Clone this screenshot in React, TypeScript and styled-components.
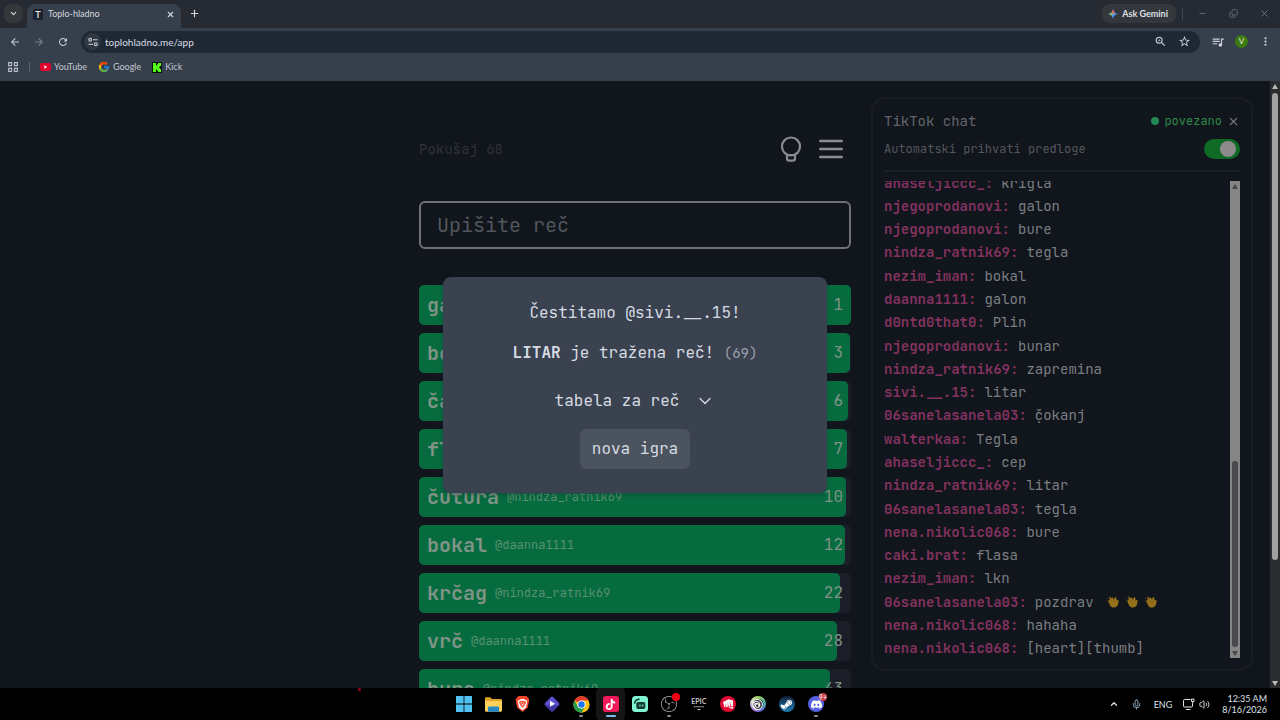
import React from "react";
import styled, { createGlobalStyle } from "styled-components";
import {
  MdArrowBack,
  MdArrowForward,
  MdRefresh,
  MdOutlineZoomIn,
  MdStarBorder,
  MdQueueMusic,
  MdMoreVert,
} from "react-icons/md";
import {
  SiTiktok,
  SiBrave,
  SiObsstudio,
  SiRiotgames,
  SiUbisoft,
  SiDiscord,
} from "react-icons/si";
import { FcGoogle } from "react-icons/fc";
import { FaSteamSymbol } from "react-icons/fa";
import { ChevronDown, ChevronUp, Copy, Mic, Minus, Plus, Volume2, X } from "lucide-react";

const mono = `"JetBrains Mono", "DejaVu Sans Mono", "Liberation Mono", monospace`;
const ui = `Lato, Roboto, "Noto Sans", sans-serif`;

const GlobalStyle = createGlobalStyle`
  * { box-sizing: border-box; }
  body { margin: 0; background: #11151c; }
  button { border: 0; padding: 0; background: none; color: inherit; font: inherit; cursor: pointer; }
  a { color: inherit; text-decoration: none; }
  p { margin: 0; }
  svg { display: block; flex: none; }
`;

const Desktop = styled.div`
  height: 100vh;
  display: flex;
  flex-direction: column;
  overflow: hidden;
  font-family: ${ui};
`;

/* ---------- browser chrome ---------- */

const TabStrip = styled.header`
  flex: none;
  height: 28px;
  display: flex;
  align-items: center;
  padding: 0 0 1px 4px;
  background: #252a33;
  color: #d3d7dd;
`;

const TabSearch = styled.button`
  width: 19px;
  height: 19px;
  display: grid;
  place-items: center;
  border-radius: 7px;
  background: #35373b;
`;

const Tab = styled.div`
  align-self: flex-end;
  width: 154px;
  height: 24px;
  margin: 0 0 -1px 4px;
  padding: 0 6px 4px;
  display: flex;
  align-items: center;
  gap: 5px;
  border-radius: 8px 8px 0 0;
  background: #363f4c;
  font-size: 9px;
  line-height: 12px;
`;

const TabTitle = styled.span`
  flex: 1;
`;

const Favicon = styled.span`
  width: 10px;
  height: 11px;
  display: grid;
  place-items: center;
  border-radius: 2px;
  background: #1b222d;
  color: #ffffff;
  font-size: 10px;
  line-height: 10px;
`;

const NewTab = styled.button`
  margin-left: 8px;
`;

const WindowControls = styled.div`
  margin-left: auto;
  display: flex;
  align-items: center;
  color: #747982;
`;

const AskGemini = styled.button`
  height: 19px;
  padding: 0 8px 0 6px;
  display: flex;
  align-items: center;
  gap: 4px;
  border-radius: 8px;
  background: #34373b;
  color: #dfe1e5;
  font-size: 9px;
  font-weight: 700;
`;

const Separator = styled.i`
  width: 1px;
  height: 12px;
  margin: 0 4px 0 6px;
  background: #414854;
`;

const WindowButton = styled.button`
  width: 31px;
  height: 27px;
  display: grid;
  place-items: center;
`;

const Toolbar = styled.nav`
  flex: none;
  height: 27px;
  display: flex;
  align-items: center;
  padding: 0 3px 0 8px;
  background: #363f4c;
  color: #cbd0d8;
`;

const ToolButton = styled.button<{ $dim?: boolean }>`
  width: 24px;
  height: 20px;
  display: grid;
  place-items: center;
  color: ${(p) => (p.$dim ? "#7a828e" : "#cbd0d8")};
`;

const NavButtons = styled.div`
  display: flex;
  margin: 0 6px 0 -5px;
`;

const AddressBar = styled.div`
  flex: 1;
  height: 22px;
  margin-right: 6px;
  padding: 0 4px 0 3px;
  display: flex;
  align-items: center;
  border-radius: 11px;
  background: #1e2734;
`;

const SiteInfo = styled.button`
  width: 17px;
  height: 17px;
  display: grid;
  place-items: center;
  border-radius: 50%;
  background: #303844;
`;

const Address = styled.input`
  flex: 1;
  min-width: 0;
  margin-left: 4px;
  padding: 0;
  border: 0;
  outline: 0;
  background: none;
  color: #dadee4;
  font: 10px/16px ${ui};
`;

const Avatar = styled.button`
  width: 13px;
  height: 13px;
  margin: 0 5px;
  border-radius: 50%;
  background: #3c7a12;
  color: #e6ecd9;
  font-size: 8px;
  line-height: 13px;
`;

const Bookmarks = styled.nav`
  flex: none;
  height: 26px;
  padding: 0 8px 2px;
  display: flex;
  align-items: center;
  gap: 11px;
  background: #363f4c;
  color: #c3c8d0;
  font-size: 9px;
  line-height: 12px;
`;

const Bookmark = styled.a`
  display: flex;
  align-items: center;
  gap: 3px;
`;

const BookmarkDivider = styled.i`
  width: 1px;
  height: 10px;
  margin-right: -1px;
  background: #5a626f;
`;

/* ---------- page ---------- */

const Viewport = styled.div`
  flex: 1;
  min-height: 0;
  display: flex;
`;

const Page = styled.div`
  position: relative;
  flex: 1;
  min-width: 0;
  overflow: hidden;
  display: grid;
  grid-template-columns: 1fr minmax(0, 432px) 1fr;
  grid-template-rows: minmax(0, 1fr);
  background: #11151c;
  font-family: ${mono};
`;

const Game = styled.main`
  grid-column: 2;
  padding-top: 52px;
`;

const GameHeader = styled.div`
  height: 32px;
  display: flex;
  align-items: center;
  gap: 8px;
  padding-right: 4px;
  color: #898c90;
`;

const Attempt = styled.span`
  flex: 1;
  color: #2f3338;
  font-size: 14px;
  line-height: 20px;
`;

const IconButton = styled.button`
  width: 32px;
  height: 32px;
  display: grid;
  place-items: center;
`;

const WordInput = styled.input`
  display: block;
  width: 100%;
  height: 48px;
  margin: 36px 0;
  padding: 0 16px;
  border: 2px solid #6e7175;
  border-radius: 6px;
  outline: 0;
  background: #11151c;
  color: #898c90;
  font: 20px/28px ${mono};
  &::placeholder { color: #53575d; opacity: 1; }
`;

const Guesses = styled.div`
  display: flex;
  flex-direction: column;
  gap: 8px;
`;

const Guess = styled.div`
  height: 40px;
  border-radius: 5px;
  display: grid;
  background: #1b1e28;
  color: #7f9485;
`;

const GuessBar = styled.div`
  grid-area: 1 / 1;
  border-radius: 5px;
  background: #076b40;
`;

const GuessText = styled.div`
  grid-area: 1 / 1;
  display: flex;
  align-items: center;
  gap: 8px;
  padding: 0 8px;
`;

const Word = styled.b`
  font-size: 20px;
  line-height: 28px;
`;

const Author = styled.span`
  flex: 1;
  color: #58916f;
  font-size: 12px;
  line-height: 16px;
`;

const Rank = styled.span`
  font-size: 16px;
  line-height: 24px;
`;

const Overlay = styled.div`
  position: absolute;
  inset: 0;
  display: grid;
  place-items: center;
`;

const Modal = styled.section`
  width: 384px;
  padding: 24px;
  display: flex;
  flex-direction: column;
  align-items: center;
  border-radius: 8px;
  background: #3a4250;
  box-shadow: 0 2px 4px rgba(20, 50, 45, 0.4);
  color: #d6dbe3;
  font-size: 16px;
  line-height: 24px;
`;

const Result = styled.p`
  margin-top: 16px;
`;

const Count = styled.span`
  color: #9aa1ad;
  font-size: 14px;
`;

const TableToggle = styled.button`
  height: 40px;
  margin: 16px 0 8px;
  display: flex;
  align-items: center;
  gap: 16px;
`;

const NewGame = styled.button`
  height: 40px;
  padding: 0 12px;
  border-radius: 6px;
  background: #4b535e;
`;

/* ---------- chat ---------- */

const Chat = styled.aside`
  margin: 16px 17px 17px 20px;
  padding: 12px 11px 11px;
  display: flex;
  flex-direction: column;
  border: 2px solid #191e26;
  border-radius: 14px;
  color: #62666b;
`;

const ChatHeader = styled.div`
  display: flex;
  align-items: center;
  justify-content: space-between;
  font-size: 14px;
  line-height: 20px;
`;

const Status = styled.span`
  display: flex;
  align-items: center;
  gap: 5px;
  color: #2c8a48;
  font-size: 12px;
`;

const Dot = styled.i`
  width: 8px;
  height: 8px;
  border-radius: 50%;
  background: #228750;
`;

const CloseChat = styled.button`
  color: #73777d;
`;

const AutoAccept = styled.label`
  height: 41px;
  padding: 8px 0 11px;
  display: flex;
  align-items: center;
  justify-content: space-between;
  border-bottom: 2px solid #1b2028;
  color: #53575d;
  font-size: 12px;
  line-height: 20px;
`;

const Toggle = styled.input`
  appearance: none;
  width: 36px;
  height: 20px;
  margin: 0;
  padding: 2px;
  border-radius: 10px;
  background: #0f6a26;
  &::before {
    content: "";
    display: block;
    width: 16px;
    height: 16px;
    margin-left: 14px;
    border-radius: 50%;
    background: #8d8a8c;
  }
`;

const MessageArea = styled.div`
  flex: 1;
  min-height: 0;
  margin-top: 9px;
  display: flex;
  overflow: hidden;
`;

const Messages = styled.div`
  flex: 1;
  display: flex;
  flex-direction: column;
  align-self: flex-end;
  min-height: 489px;
  margin-bottom: -2px;
`;

const Message = styled.p`
  flex: 1;
  display: flex;
  align-items: center;
  gap: 8px;
  color: #7b7f83;
  font-size: 14px;
  line-height: 22px;
`;

const Sender = styled.b`
  color: #82325f;
`;

const Claps = styled.span`
  display: flex;
  gap: 6px;
  margin-left: 4px;
`;

const Track = styled.div<{ $page?: boolean }>`
  flex: none;
  width: 10px;
  display: flex;
  flex-direction: column;
  align-items: center;
  padding: 3px 0 2px;
  background: ${(p) => (p.$page ? "#2b2c2d" : "#858585")};
  color: ${(p) => (p.$page ? "#b8b8b8" : "#46484b")};
`;

const Rail = styled.div`
  flex: 1;
  width: 6px;
  margin: 4px 0;
`;

const Thumb = styled.div<{ $page?: boolean }>`
  border-radius: 3px;
  background: ${(p) => (p.$page ? "#a0a0a0" : "#48494c")};
`;

/* ---------- taskbar ---------- */

const Taskbar = styled.footer`
  flex: none;
  height: 32px;
  display: grid;
  grid-template-columns: 1fr 382px 1fr;
  align-items: center;
  background: #000000;
  color: #dfe3e8;
`;

const RecordingMark = styled.i`
  justify-self: end;
  align-self: start;
  width: 3px;
  height: 3px;
  margin-right: 88px;
  border-radius: 50%;
  background: #a00020;
`;

const Apps = styled.div`
  height: 32px;
  display: grid;
  grid-template-columns: repeat(13, 1fr);
  align-items: center;
`;

const AppButton = styled.button<{ $state?: "open" | "active" }>`
  position: relative;
  height: 32px;
  display: grid;
  place-items: center;
  border-radius: 4px;
  background: ${(p) => (p.$state === "active" ? "#151515" : "transparent")};
  &::after {
    content: "";
    display: ${(p) => (p.$state ? "block" : "none")};
    position: absolute;
    bottom: 3px;
    width: ${(p) => (p.$state === "active" ? "10px" : "4px")};
    height: 2px;
    border-radius: 1px;
    background: ${(p) => (p.$state === "active" ? "#79bde8" : "#8b8b8b")};
  }
`;

const Tile = styled.span<{ $bg: string; $round?: boolean }>`
  width: 16px;
  height: 16px;
  display: grid;
  place-items: center;
  border-radius: ${(p) => (p.$round ? "50%" : "3px")};
  background: ${(p) => p.$bg};
  color: #ffffff;
`;

const LionShield = styled.span`
  width: 14px;
  height: 16px;
  display: grid;
  place-items: center;
  clip-path: polygon(22% 0, 78% 0, 100% 20%, 88% 72%, 50% 100%, 12% 72%, 0 20%);
  background: #f0462c;
  color: #ffffff;
`;

const EpicMark = styled.span`
  display: flex;
  flex-direction: column;
  align-items: center;
  gap: 1px;
  color: #c4c4c4;
  font: bold 7px/7px "Liberation Sans Narrow", ${ui};
`;

const Badge = styled.span<{ $small?: boolean }>`
  position: absolute;
  top: 5px;
  right: 4px;
  min-width: 8px;
  height: 8px;
  border-radius: 4px;
  background: ${(p) => (p.$small ? "#f00012" : "#c8404a")};
  color: #ffffff;
  font-size: 7px;
  line-height: 8px;
`;

const Tray = styled.div`
  justify-self: end;
  display: flex;
  align-items: center;
  padding-right: 13px;
  font-size: 9px;
`;

const TrayItem = styled.span<{ $gap: number }>`
  margin-right: ${(p) => p.$gap}px;
`;

const Clock = styled.time`
  text-align: right;
  line-height: 11px;
`;

/* ---------- drawings ---------- */

const Arrow = ({ down }: { down?: boolean }) => (
  <svg width="6" height="5" viewBox="0 0 6 5" aria-hidden="true">
    <path d={down ? "M0 0h6L3 5z" : "M0 5h6L3 0z"} fill="currentColor" />
  </svg>
);

const GeminiSpark = () => (
  <svg width="10" height="10" viewBox="0 0 24 24" aria-hidden="true">
    <path d="M12 0c1 7 5 11 12 12-7 1-11 5-12 12-1-7-5-11-12-12C7 11 11 7 12 0z" fill="#4f97f7" />
    <path d="M12 0c.6 4.500 2.500 7.800 5.500 9.800L12 12 6.500 9.800C9.500 7.800 11.400 4.500 12 0z" fill="#e8705a" />
    <path d="M0 12c3.500-.5 6.300-1.700 8.300-3.700L12 12l-3.700 3.700C6.300 13.700 3.500 12.500 0 12z" fill="#8db85a" />
  </svg>
);

const TuneIcon = () => (
  <svg width="10" height="10" viewBox="0 0 10 10" fill="none" stroke="#cbd0d8" strokeWidth="1.1" aria-hidden="true">
    <circle cx="2.2" cy="2.8" r="1.4" />
    <path d="M5 2.8h4.5M.5 7.2H5" />
    <circle cx="7.8" cy="7.2" r="1.4" />
  </svg>
);

const AppsIcon = () => (
  <svg width="10" height="10" viewBox="0 0 10 10" fill="none" stroke="#b9bfc8" strokeWidth="1.1" aria-hidden="true">
    <path d="M.6.6h3v3h-3zM6.4.6h3v3h-3zM.6 6.4h3v3h-3zM6.4 6.4h3v3h-3z" />
  </svg>
);

const YouTubeIcon = () => (
  <svg width="11" height="8" viewBox="0 0 11 8" aria-hidden="true">
    <rect width="11" height="8" rx="2" fill="#e2032f" />
    <path d="M4.3 2.3v3.4L7.3 4z" fill="#fff" />
  </svg>
);

const KickIcon = () => (
  <svg width="10" height="11" viewBox="0 0 10 11" aria-hidden="true">
    <rect width="10" height="11" fill="#0b1208" />
    <path d="M1 1h3v2.5h1V2.2h1V1h3v3H8v1H7v1h1v1h1v3H6V8.8H5V7.5H4V10H1z" fill="#53fc18" />
  </svg>
);

const BulbIcon = () => (
  <svg width="24" height="28" viewBox="0 0 24 28" fill="none" stroke="currentColor" strokeWidth="2.2" aria-hidden="true">
    <circle cx="12" cy="11.500" r="9" />
    <path d="M8 20h8v3.500c0 1.500-.8 2.200-2.200 2.200h-3.600c-1.400 0-2.200-.7-2.200-2.200z" strokeLinejoin="round" />
  </svg>
);

const MenuIcon = () => (
  <svg width="24" height="20" viewBox="0 0 24 20" fill="none" stroke="currentColor" strokeWidth="2.400" strokeLinecap="round" aria-hidden="true">
    <path d="M1.200 2h21.600M1.200 10h21.600M1.200 18h21.600" />
  </svg>
);

const Clap = () => (
  <svg width="13" height="13" viewBox="0 0 13 13" role="img" aria-label="clap">
    <path d="M.8 3.500 2 2.900M1 6h1M3.200 1l.6 1.200" stroke="#6b5a22" strokeWidth=".7" />
    <path
      d="M2.500 6.200C2 5.200 3 4.500 3.800 5.100L3.300 3.300c-.2-1 1-1.400 1.500-.6l.5.9c-.2-1.100 1-1.600 1.600-.7l1.100 1.700.6-1.900c.5-1 1.700-.7 1.700.4l.4 2.600.6-.5c.8-.5 1.500.1 1.300 1L12 9.600c-.7 2.100-2.400 3.200-4.700 3C4.800 12.400 3.400 9.500 2.500 6.200z"
      fill="#96711c"
    />
    <path d="M5.200 5l2 3M7.200 4.600l1.500 2.600" stroke="#7d5b16" strokeWidth=".5" fill="none" />
  </svg>
);

const WindowsLogo = () => (
  <svg width="16" height="16" viewBox="0 0 16 16" aria-hidden="true">
    <path d="M0 0h7.600v7.600H0zM8.400 0H16v7.600H8.400zM0 8.400h7.600V16H0zM8.400 8.400H16V16H8.400z" fill="#4fc0f0" />
  </svg>
);

const FolderIcon = () => (
  <svg width="17" height="15" viewBox="0 0 17 15" aria-hidden="true">
    <path d="M0 1.500C0 .7.5.3 1.200.3h4L7 2h8.800c.7 0 1.200.4 1.200 1.200V12H0z" fill="#e0a52a" />
    <path d="M0 4h17v9.500c0 .7-.5 1.200-1.200 1.200H1.200c-.7 0-1.200-.5-1.200-1.200z" fill="#fbd15b" />
    <path d="M3 14.700V11c0-1 .5-1.500 1.500-1.500h8c1 0 1.500.5 1.500 1.500v3.700z" fill="#2387c5" />
  </svg>
);

const DiamondIcon = () => (
  <svg width="18" height="18" viewBox="0 0 18 18" aria-hidden="true">
    <rect x="3.300" y="3.300" width="11.400" height="11.400" rx="1.500" transform="rotate(45 9 9)" fill="#5b50cf" />
    <path d="M1.500 9.500 9 17l7.500-7.500L9 11z" fill="#4038a5" />
    <path d="M7 5.800v6L12 8.800z" fill="#fff" />
  </svg>
);

const ChromeIcon = () => (
  <svg width="17" height="17" viewBox="0 0 48 48" aria-hidden="true">
    <circle cx="24" cy="24" r="23" fill="#fbc116" />
    <path d="M24 24 4.100 12.500A23 23 0 0 1 43.900 12.500H24z" fill="#e33b2e" />
    <path d="M4.100 12.500A23 23 0 0 0 24 47l9.900-17.300L24 36 14 29.700z" fill="#229a49" />
    <circle cx="24" cy="24" r="11.500" fill="#fff" />
    <circle cx="24" cy="24" r="9" fill="#1a73e8" />
  </svg>
);

const CameraIcon = () => (
  <svg width="16" height="16" viewBox="0 0 16 16" aria-hidden="true">
    <rect width="16" height="16" rx="3.500" fill="#7ff5d0" />
    <path d="M2.500 7.800c.3-3 2-4.500 5.200-4.500" stroke="#123b32" strokeWidth="1.500" fill="none" />
    <rect x="4.300" y="6" width="9" height="7" rx="1.800" fill="#123b32" />
    <path d="M8 8.500v2M10.700 8.500v2" stroke="#7ff5d0" strokeWidth="1.200" />
  </svg>
);

const NetworkIcon = () => (
  <svg width="12" height="12" viewBox="0 0 12 12" fill="none" stroke="currentColor" strokeWidth="1" aria-hidden="true">
    <path d="M7.500 1.500H1.500Q.5 1.500.5 2.500v5.500q0 1 1 1h7q1 0 1-1V6M3 11.500h4.500" />
    <path d="M8.500 1h2.500v2.500H8.500zM9.700 3.500V6" />
  </svg>
);

/* ---------- data ---------- */

const guesses = [
  { word: "galon", author: "@daanna1111", rank: 1, fill: 432 },
  { word: "bokal", author: "@nezim_iman", rank: 3, fill: 431 },
  { word: "čaša", author: "@daanna1111", rank: 6, fill: 429 },
  { word: "flaša", author: "@caki.brat", rank: 7, fill: 428 },
  { word: "čutura", author: "@nindza_ratnik69", rank: 10, fill: 427 },
  { word: "bokal", author: "@daanna1111", rank: 12, fill: 426 },
  { word: "krčag", author: "@nindza_ratnik69", rank: 22, fill: 421 },
  { word: "vrč", author: "@daanna1111", rank: 28, fill: 418 },
  { word: "bure", author: "@nindza_ratnik69", rank: 43, fill: 411 },
];

const messages: [string, string, number?][] = [
  ["ahaseljiccc_", "krigla"],
  ["njegoprodanovi", "galon"],
  ["njegoprodanovi", "bure"],
  ["nindza_ratnik69", "tegla"],
  ["nezim_iman", "bokal"],
  ["daanna1111", "galon"],
  ["d0ntd0that0", "Plin"],
  ["njegoprodanovi", "bunar"],
  ["nindza_ratnik69", "zapremina"],
  ["sivi.__.15", "litar"],
  ["06sanelasanela03", "č\u0323okanj"],
  ["walterkaa", "Tegla"],
  ["ahaseljiccc_", "cep"],
  ["nindza_ratnik69", "litar"],
  ["06sanelasanela03", "tegla"],
  ["nena.nikolic068", "bure"],
  ["caki.brat", "flasa"],
  ["nezim_iman", "lkn"],
  ["06sanelasanela03", "pozdrav", 3],
  ["nena.nikolic068", "hahaha"],
  ["nena.nikolic068", "[heart][thumb]"],
];

const Scrollbar = ({ page, start, size }: { page?: boolean; start: number; size: number }) => (
  <Track $page={page} aria-hidden="true">
    <Arrow />
    <Rail>
      <div style={{ height: `${start}%` }} />
      <Thumb $page={page} style={{ height: `${size}%` }} />
    </Rail>
    <Arrow down />
  </Track>
);

const BrowserChrome = () => (
  <>
    <TabStrip>
      <TabSearch aria-label="Search tabs"><ChevronDown size={9} strokeWidth={3} /></TabSearch>
      <Tab>
        <Favicon>T</Favicon>
        <TabTitle>Toplo-hladno</TabTitle>
        <button aria-label="Close tab"><X size={9} strokeWidth={3} /></button>
      </Tab>
      <NewTab aria-label="New tab"><Plus size={11} strokeWidth={2.5} /></NewTab>
      <WindowControls>
        <AskGemini><GeminiSpark />Ask Gemini</AskGemini>
        <Separator />
        <WindowButton aria-label="Minimize"><Minus size={9} /></WindowButton>
        <WindowButton aria-label="Restore"><Copy size={9} style={{ transform: "scaleY(-1)" }} /></WindowButton>
        <WindowButton aria-label="Close"><X size={11} /></WindowButton>
      </WindowControls>
    </TabStrip>
    <Toolbar>
      <NavButtons>
        <ToolButton aria-label="Back"><MdArrowBack size={12} /></ToolButton>
        <ToolButton aria-label="Forward" $dim><MdArrowForward size={12} /></ToolButton>
        <ToolButton aria-label="Reload"><MdRefresh size={12} /></ToolButton>
      </NavButtons>
      <AddressBar>
        <SiteInfo aria-label="Site information"><TuneIcon /></SiteInfo>
        <Address aria-label="Address" defaultValue="toplohladno.me/app" />
        <ToolButton aria-label="Zoom"><MdOutlineZoomIn size={13} /></ToolButton>
        <ToolButton aria-label="Bookmark"><MdStarBorder size={13} /></ToolButton>
      </AddressBar>
      <ToolButton aria-label="Media"><MdQueueMusic size={14} /></ToolButton>
      <Avatar>V</Avatar>
      <ToolButton aria-label="Menu"><MdMoreVert size={13} /></ToolButton>
    </Toolbar>
    <Bookmarks>
      <button aria-label="Apps"><AppsIcon /></button>
      <BookmarkDivider />
      <Bookmark href="#youtube"><YouTubeIcon />YouTube</Bookmark>
      <Bookmark href="#google"><FcGoogle size={12} />Google</Bookmark>
      <Bookmark href="#kick"><KickIcon />Kick</Bookmark>
    </Bookmarks>
  </>
);

const ChatPanel = () => (
  <Chat>
    <ChatHeader>
      TikTok chat
      <Status>
        <Dot />
        povezano
        <CloseChat aria-label="Zatvori"><X size={13} /></CloseChat>
      </Status>
    </ChatHeader>
    <AutoAccept>
      Automatski prihvati predloge
      <Toggle type="checkbox" defaultChecked />
    </AutoAccept>
    <MessageArea>
      <Messages>
        {messages.map(([sender, text, claps], i) => (
          <Message key={i}>
            <Sender>{sender}:</Sender>
            <span>{text}</span>
            {claps && (
              <Claps>
                {Array.from({ length: claps }, (_, n) => <Clap key={n} />)}
              </Claps>
            )}
          </Message>
        ))}
      </Messages>
      <Scrollbar start={59} size={41} />
    </MessageArea>
  </Chat>
);

const TaskbarApps = () => (
  <Apps>
    <AppButton aria-label="Start"><WindowsLogo /></AppButton>
    <AppButton aria-label="Files"><FolderIcon /></AppButton>
    <AppButton aria-label="Brave"><LionShield><SiBrave size={11} /></LionShield></AppButton>
    <AppButton aria-label="Player"><DiamondIcon /></AppButton>
    <AppButton aria-label="Chrome" $state="open"><ChromeIcon /></AppButton>
    <AppButton aria-label="TikTok Live" $state="active"><Tile $bg="#f0195a"><SiTiktok size={11} /></Tile></AppButton>
    <AppButton aria-label="Camera"><CameraIcon /></AppButton>
    <AppButton aria-label="OBS" $state="open"><SiObsstudio size={16} color="#b0b0b0" /><Badge $small /></AppButton>
    <AppButton aria-label="Epic Games">
      <EpicMark>
        EPIC
        <svg width="10" height="5" viewBox="0 0 10 5" aria-hidden="true">
          <path d="M0 .6h10" stroke="#9a9a9a" strokeDasharray="1.500 .6" strokeWidth="1.200" />
          <path d="M3 3h4L5 4.600z" fill="#c4c4c4" />
        </svg>
      </EpicMark>
    </AppButton>
    <AppButton aria-label="Riot"><Tile $bg="#e00a32" $round><SiRiotgames size={10} /></Tile></AppButton>
    <AppButton aria-label="Ubisoft">
      <Tile $bg="radial-gradient(#30343c 45%, transparent 50%), conic-gradient(#a5d860, #4bb8a0, #5a70d8, #a070d0, #d8d8d8, #a5d860)" $round>
        <SiUbisoft size={11} />
      </Tile>
    </AppButton>
    <AppButton aria-label="Steam"><Tile $bg="linear-gradient(#12203c, #1d7bb0)" $round><FaSteamSymbol size={13} /></Tile></AppButton>
    <AppButton aria-label="Discord" $state="open"><Tile $bg="#5662e0" $round><SiDiscord size={11} /></Tile><Badge>9+</Badge></AppButton>
  </Apps>
);

export default function App() {
  return (
    <Desktop>
      <GlobalStyle />
      <BrowserChrome />
      <Viewport>
        <Page>
          <Game>
            <GameHeader>
              <Attempt>Pokušaj 68</Attempt>
              <IconButton aria-label="Pomoć"><BulbIcon /></IconButton>
              <IconButton aria-label="Meni"><MenuIcon /></IconButton>
            </GameHeader>
            <WordInput aria-label="Reč" placeholder="Upišite reč" />
            <Guesses>
              {guesses.map((g) => (
                <Guess key={g.rank}>
                  <GuessBar style={{ width: `${(g.fill / 432) * 100}%` }} />
                  <GuessText>
                    <Word>{g.word}</Word>
                    <Author>{g.author}</Author>
                    <Rank>{g.rank}</Rank>
                  </GuessText>
                </Guess>
              ))}
            </Guesses>
          </Game>
          <ChatPanel />
          <Overlay>
            <Modal role="dialog" aria-label="Kraj igre">
              <p>Čestitamo @sivi.__.15!</p>
              <Result><b>LITAR</b> je tražena reč! <Count>(69)</Count></Result>
              <TableToggle>tabela za reč<ChevronDown size={20} strokeWidth={1.5} /></TableToggle>
              <NewGame>nova igra</NewGame>
            </Modal>
          </Overlay>
        </Page>
        <Scrollbar page start={0} size={80} />
      </Viewport>
      <Taskbar>
        <RecordingMark />
        <TaskbarApps />
        <Tray>
          <TrayItem $gap={12}><ChevronUp size={10} strokeWidth={3} /></TrayItem>
          <TrayItem $gap={12}><Mic size={11} color="#9ab4c4" /></TrayItem>
          <TrayItem $gap={11}>ENG</TrayItem>
          <TrayItem $gap={4}><NetworkIcon /></TrayItem>
          <TrayItem $gap={12}><Volume2 size={11} /></TrayItem>
          <Clock>12:35 AM<br />8/16/2026</Clock>
        </Tray>
      </Taskbar>
    </Desktop>
  );
}
